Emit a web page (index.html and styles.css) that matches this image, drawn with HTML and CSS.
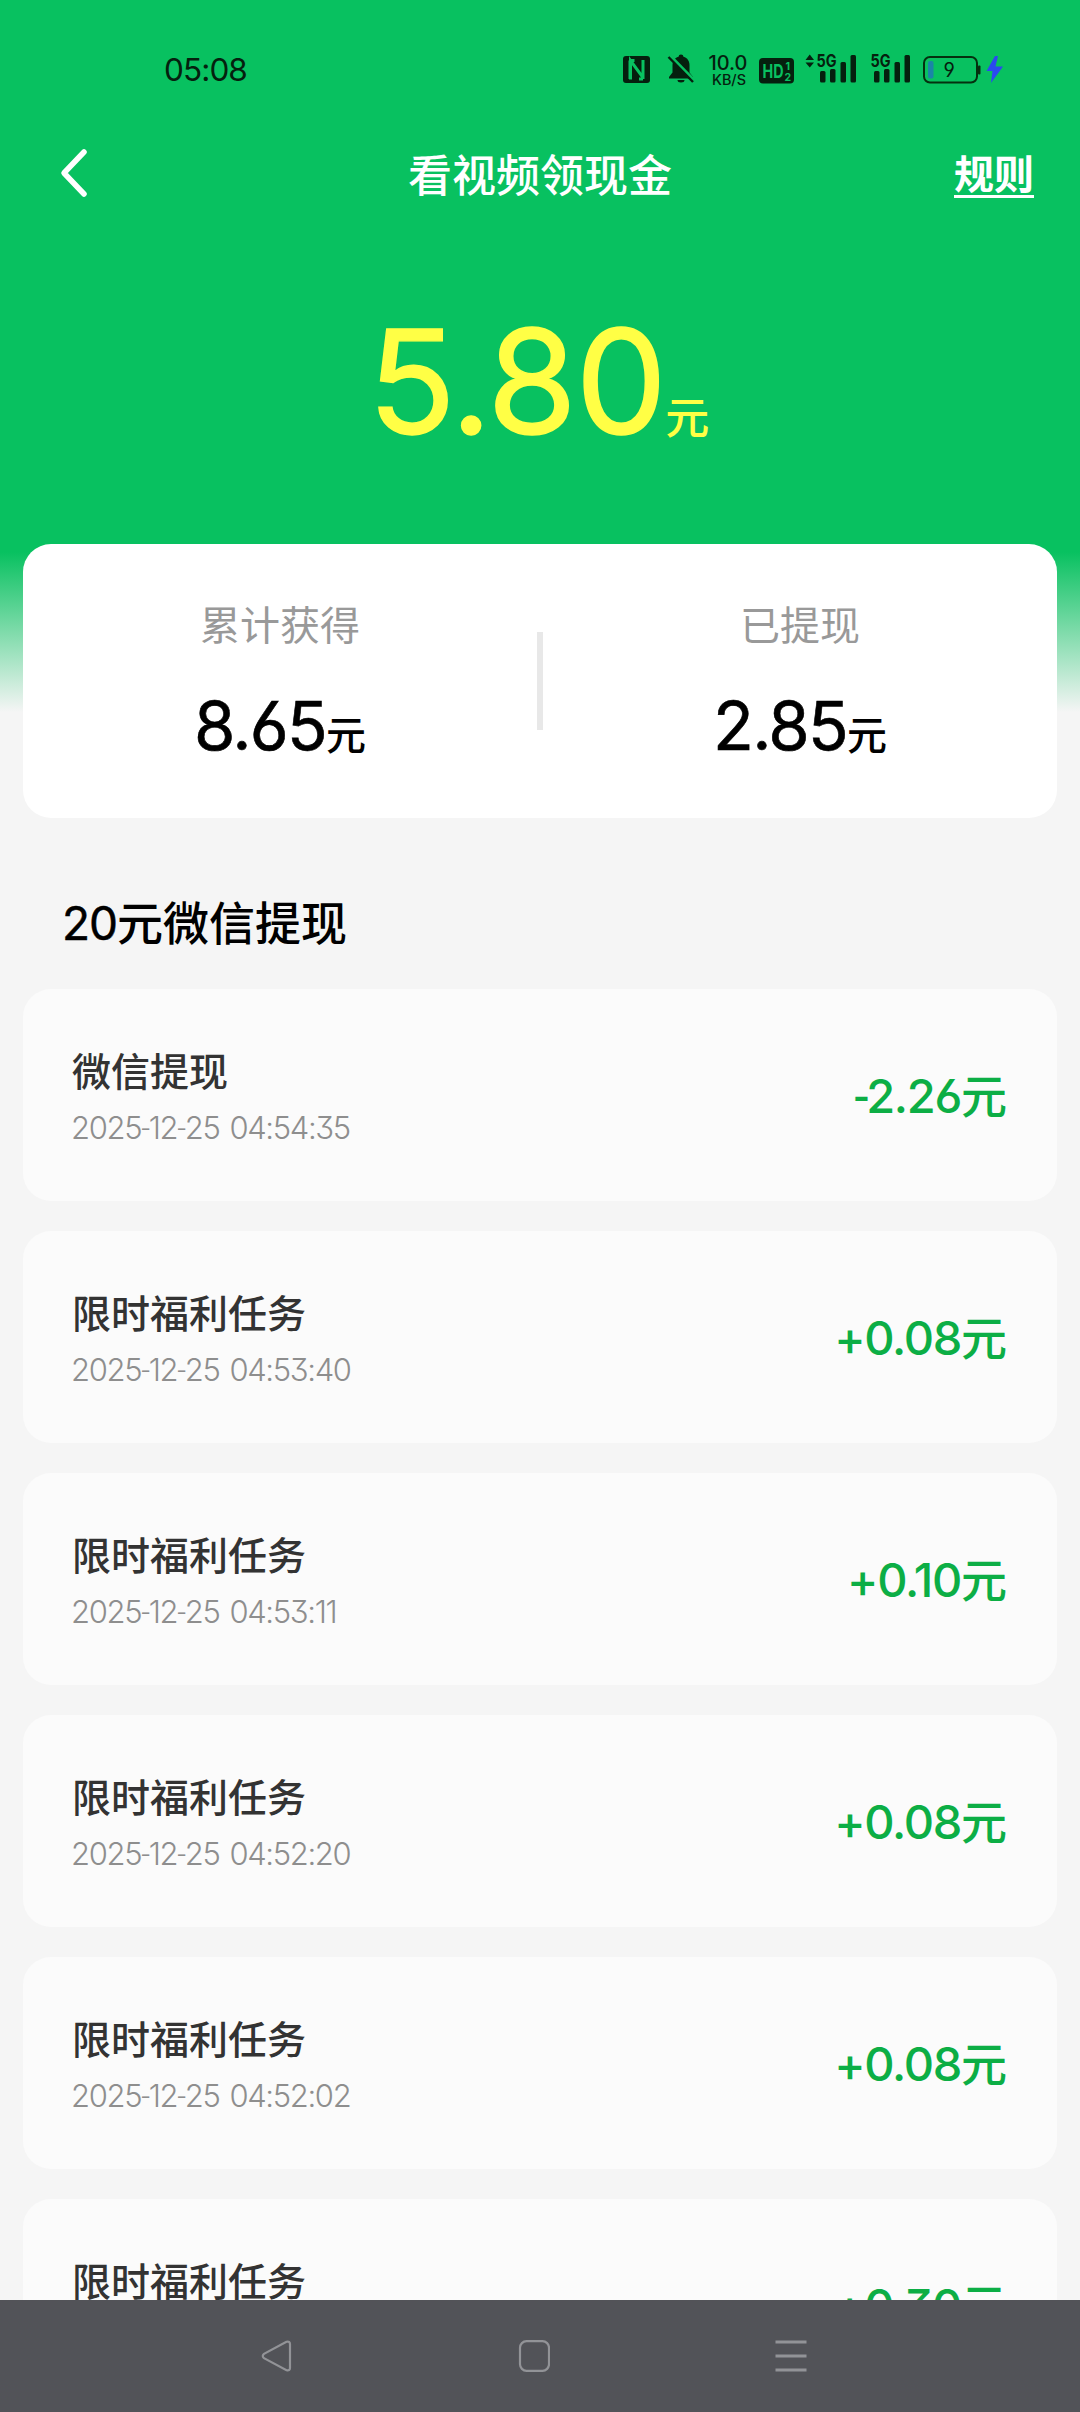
FILE: index.html
```html
<!DOCTYPE html>
<html lang="zh-CN">
<head>
<meta charset="utf-8">
<meta name="viewport" content="width=1080">
<title>看视频领现金</title>
<link rel="stylesheet" href="styles.css">
</head>
<body>
<div class="screen">
  <header class="hero">
    <div class="status">
      <span class="clock">05:08</span>
      <svg class="status-icons" width="400" height="40" viewBox="610 50 400 40">
        <!-- NFC -->
        <rect x="623" y="56" width="27" height="27" rx="3" fill="#05200e"/>
        <path d="M630.500 79.500V60.500L643 77.500V79M630 60.500V79M634.500 60.500H631M643 60V78M639 79H643" fill="none" stroke="#08c160" stroke-width="3"/>
        <!-- muted bell -->
        <path d="M681 54.500a2.500 2.500 0 0 1 2.500 2.200c4 1.100 6 4.500 6 8.500v7.300l3.500 4.500v1.500H669v-1.500l3.500-4.500v-7.300c0-4 2-7.400 6-8.500A2.500 2.500 0 0 1 681 54.500zM677.500 80h7a3.500 2.500 0 0 1-7 0z" fill="#05200e"/>
        <path d="M670 55.500L694.500 80.500" stroke="#08c160" stroke-width="3"/>
        <path d="M668.500 57L693 82" stroke="#05200e" stroke-width="2.400"/>
        <!-- network speed -->
        <text x="708.500" y="70" class="ic" font-size="19.500" font-weight="500" textLength="39" lengthAdjust="spacingAndGlyphs">10.0</text>
        <text x="712" y="85" class="ic" font-size="14" font-weight="500" textLength="34" lengthAdjust="spacingAndGlyphs">KB/S</text>
        <!-- HD -->
        <rect x="759" y="58" width="35" height="25.500" rx="4" fill="#05200e"/>
        <text x="762.500" y="77.500" class="ic cut" font-size="19" font-weight="700" textLength="21" lengthAdjust="spacingAndGlyphs">HD</text>
        <text x="785.500" y="69.500" class="ic cut" font-size="10.500" font-weight="700">1</text>
        <text x="784.500" y="80.500" class="ic cut" font-size="10.500" font-weight="700">2</text>
        <!-- SIM 1 -->
        <path d="M805.500 60h8.500l-4.250-5.500zM805.500 62.500h8.500l-4.250 5z" fill="#05200e"/>
        <text x="816.500" y="67" class="ic" font-size="17.500" font-weight="700" textLength="20" lengthAdjust="spacingAndGlyphs">5G</text>
        <g id="bars" fill="#05200e">
          <rect x="820" y="71" width="5.500" height="11.500" rx="1.500"/><rect x="830" y="69" width="5.500" height="13.500" rx="1.500"/><rect x="840.500" y="62" width="5.500" height="20.500" rx="1.500"/><rect x="850.500" y="55" width="5.500" height="27.500" rx="1.500"/>
        </g>
        <!-- SIM 2 -->
        <text x="870.500" y="67" class="ic" font-size="17.500" font-weight="700" textLength="20" lengthAdjust="spacingAndGlyphs">5G</text>
        <use href="#bars" x="54"/>
        <!-- battery -->
        <rect x="924" y="57" width="53" height="25.500" rx="6" fill="none" stroke="#05300f" stroke-width="2"/>
        <rect x="978" y="65.500" width="2.500" height="9" rx="1" fill="#05300f"/>
        <rect x="928" y="61" width="5.500" height="17.500" rx="2" fill="#1a86a6"/>
        <text x="943.500" y="77" class="ic" font-size="19.500">9</text>
        <path d="M995 56l-8.500 15h6l-1.500 12 12-16.500h-7.500l2.500-10.500z" fill="#2b49ef"/>
      </svg>
    </div>
    <nav class="bar">
      <svg class="back" width="30" height="50" viewBox="0 0 30 50"><path d="M25 4L5 25L25 46" fill="none" stroke="#fff" stroke-width="5.500" stroke-linecap="round" stroke-linejoin="round"/></svg>
      <h1 class="title">看视频领现金</h1>
      <a class="rules">规则</a>
    </nav>
    <div class="balance"><span class="balance-num">5.80</span><span class="balance-unit">元</span></div>
  </header>

  <section class="summary">
    <div class="stat">
      <div class="stat-label">累计获得</div>
      <div class="stat-value"><span class="stat-num">8.65</span><span class="stat-unit">元</span></div>
    </div>
    <div class="divider"></div>
    <div class="stat">
      <div class="stat-label">已提现</div>
      <div class="stat-value"><span class="stat-num">2.85</span><span class="stat-unit">元</span></div>
    </div>
  </section>

  <h2 class="section"><span class="section-num">20</span>元微信提现</h2>

  <ul class="records">
    <li class="record"><div><div class="name">微信提现</div><div class="date">2025<span class="dash">-</span>12<span class="dash">-</span>25 04:54:35</div></div><div class="amount"><span class="amount-num"><span class="dash">-</span>2.26</span>元</div></li>
    <li class="record"><div><div class="name">限时福利任务</div><div class="date">2025<span class="dash">-</span>12<span class="dash">-</span>25 04:53:40</div></div><div class="amount"><span class="amount-num">+0.08</span>元</div></li>
    <li class="record"><div><div class="name">限时福利任务</div><div class="date">2025<span class="dash">-</span>12<span class="dash">-</span>25 04:53:11</div></div><div class="amount"><span class="amount-num">+0.10</span>元</div></li>
    <li class="record"><div><div class="name">限时福利任务</div><div class="date">2025<span class="dash">-</span>12<span class="dash">-</span>25 04:52:20</div></div><div class="amount"><span class="amount-num">+0.08</span>元</div></li>
    <li class="record"><div><div class="name">限时福利任务</div><div class="date">2025<span class="dash">-</span>12<span class="dash">-</span>25 04:52:02</div></div><div class="amount"><span class="amount-num">+0.08</span>元</div></li>
    <li class="record"><div><div class="name">限时福利任务</div></div><div class="amount"><span class="amount-num">+0.30</span>元</div></li>
  </ul>

  <footer class="sysnav">
    <svg width="32" height="34" viewBox="0 0 32 34"><path d="M25.500 2.800L3 14.800Q.5 17 3 19.200L25.500 31.200Q29 32 29 29V5Q29 2 25.500 2.800z"/></svg>
    <svg width="32" height="34" viewBox="0 0 32 34"><rect x="2" y="2.200" width="29" height="29.600" rx="6.500"/></svg>
    <svg width="32" height="34" viewBox="0 0 32 34"><path d="M.5 3H31.500M.5 17H31.500M.5 31H31.500" stroke-width="2.800"/></svg>
  </footer>
</div>
</body>
</html>
```

FILE: styles.css
```css
* { box-sizing: border-box; }
body, h1, h2, ul { margin: 0; padding: 0; }
body {
  font-family: "Inter", "Noto Sans CJK SC", sans-serif;
  font-feature-settings: "cv03", "cv04", "cv09";
  background: #f5f5f5;
}
.screen {
  display: flex;
  flex-direction: column;
  width: 1080px;
  height: 2412px;
  overflow: hidden;
  background: linear-gradient(#08c160 0, #08c160 552px, #f5f5f5 712px);
}
.hero { flex: none; height: 544px; }

.status {
  display: flex;
  align-items: center;
  justify-content: space-between;
  height: 140px;
  padding: 0 70px 0 164px;
}
.clock { font-size: 31.5px; line-height: 40px; letter-spacing: -0.9px; color: #05200e; }
.status-icons { display: block; }
.ic { font-family: "Inter", sans-serif; fill: #05200e; }
.cut { fill: #08c160; }

.bar {
  display: grid;
  grid-template-columns: 107px 1fr 120px;
  align-items: center;
  height: 66px;
  padding: 0 46px 0 59px;
  color: #fff;
}
.back { display: block; }
.title { padding-top: 6px; font-size: 44px; font-weight: 500; line-height: 60px; text-align: center; }
.rules {
  justify-self: end;
  margin-top: 6px;
  font-size: 40px;
  font-weight: 700;
  line-height: 40px;
  border-bottom: 3px solid #fff;
}

.balance {
  display: flex;
  justify-content: center;
  align-items: baseline;
  padding-top: 86px;
  color: #ffff45;
}
.balance-num {
  margin-left: -3px;
  font-size: 145px;
  font-weight: 400;
  line-height: 180px;
  letter-spacing: -1.6px;
  -webkit-text-stroke: 1.4px #ffff45;
}
.balance-unit { font-size: 44px; font-weight: 500; line-height: 60px; }

.summary {
  display: flex;
  flex: none;
  align-items: center;
  height: 274px;
  margin: 0 23px;
  border-radius: 28px;
  background: #fff;
}
.stat { flex: 1; text-align: center; }
.stat-label { padding-bottom: 1px; font-size: 40px; line-height: 59px; color: #999; }
.stat-value {
  display: flex;
  justify-content: center;
  align-items: baseline;
  margin-top: 30px;
  color: #000;
}
.stat-num {
  font-size: 67px;
  font-weight: 400;
  line-height: 80px;
  letter-spacing: -1.7px;
  -webkit-text-stroke: 0.6px #000;
}
.stat-unit { font-size: 40px; font-weight: 500; line-height: 60px; }
.divider { width: 6px; height: 98px; background: #e8e8e8; }

.section {
  flex: none;
  height: 171px;
  padding: 72px 0 0 62px;
  font-size: 46px;
  font-weight: 500;
  line-height: 66px;
  color: #000;
}
.section-num { font-weight: 400; letter-spacing: -1px; -webkit-text-stroke: 0.5px #000; }

.records {
  display: flex;
  flex: 1;
  flex-direction: column;
  gap: 30px;
  min-height: 0;
  overflow: hidden;
  margin: 0 23px;
  list-style: none;
}
.record {
  display: flex;
  flex: none;
  justify-content: space-between;
  height: 212px;
  padding: 53px 50px 0 49px;
  border-radius: 28px;
  background: #fbfbfb;
}
.name { padding-top: 2px; font-size: 39px; font-weight: 500; line-height: 56px; color: #333; }
.date {
  margin: 8px 0 0 -1px;
  font-size: 31px;
  font-weight: 300;
  line-height: 40px;
  letter-spacing: -1.35px;
  word-spacing: 2.5px;
  color: #8e8e8e;
}
.dash { font-family: "Roboto", sans-serif; }
.amount { font-size: 46px; font-weight: 500; line-height: 108px; color: #0cae45; }
.amount-num { font-size: 47px; letter-spacing: -1.3px; }
.amount .dash { margin-right: -2px; }

.sysnav {
  display: flex;
  flex: none;
  align-items: center;
  gap: 225px;
  height: 112px;
  padding-left: 261px;
  background: #525358;
}
.sysnav svg { fill: none; stroke: #929397; stroke-width: 2.2; }
```
